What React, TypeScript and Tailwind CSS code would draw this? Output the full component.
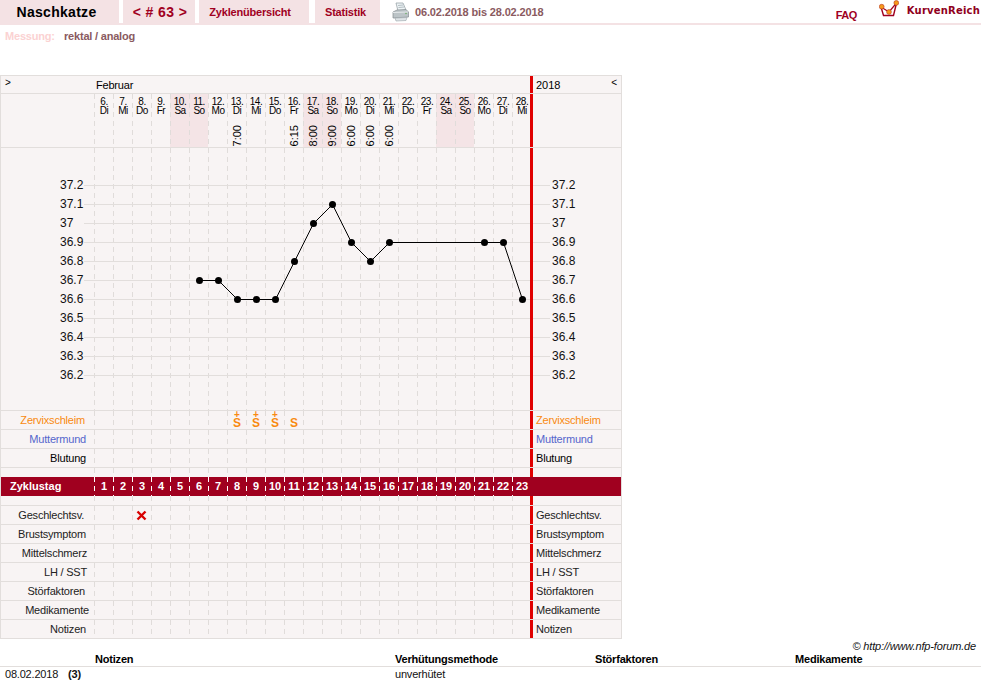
const sans = "font-['Liberation_Sans',Arial,sans-serif]";

const days = [
  ["6.", "Di", ""], ["7.", "Mi", ""], ["8.", "Do", ""], ["9.", "Fr", ""], ["10.", "Sa", ""], ["11.", "So", ""],
  ["12.", "Mo", ""], ["13.", "Di", "7:00"], ["14.", "Mi", ""], ["15.", "Do", ""], ["16.", "Fr", "6:15"], ["17.", "Sa", "8:00"],
  ["18.", "So", "9:00"], ["19.", "Mo", "6:00"], ["20.", "Di", "6:00"], ["21.", "Mi", "6:00"], ["22.", "Do", ""], ["23.", "Fr", ""],
  ["24.", "Sa", ""], ["25.", "So", ""], ["26.", "Mo", ""], ["27.", "Di", ""], ["28.", "Mi", ""],
];
const cols = days.map((_, i) => i);
const temps = ["37.2", "37.1", "37", "36.9", "36.8", "36.7", "36.6", "36.5", "36.4", "36.3", "36.2"];
const pts: [number, number][] = [
  [5, 36.7], [6, 36.7], [7, 36.6], [8, 36.6], [9, 36.6], [10, 36.8], [11, 37], [12, 37.1], [13, 36.9], [14, 36.8], [15, 36.9], [20, 36.9], [21, 36.9], [22, 36.6],
];
const PX = (i: number) => 103.5 + i * 19;
const PY = (t: number) => 37 + Math.round((37.2 - t) * 190);

function Dash({ light = false }: { light?: boolean }) {
  return (
    <div
      className={
        light
          ? "absolute left-0 top-0 bottom-0 w-px bg-[linear-gradient(#ffffff_5px,transparent_5px)] bg-[length:1px_9px]"
          : "absolute left-0 top-0 bottom-0 w-px bg-[linear-gradient(#e0dcda_5px,transparent_5px)] bg-[length:1px_9px]"
      }
    />
  );
}

function Bar() {
  return <div className="relative -ml-px w-[3px] shrink-0 bg-[#e00000]" />;
}

function Row({
  label,
  labelClass,
  right,
  rightClass,
  children,
}: {
  label: string;
  labelClass: string;
  right: string;
  rightClass?: string;
  children?: (i: number) => React.ReactNode;
}) {
  return (
    <div className="flex h-[19px] border-b border-[#e2dedc] text-[11px] leading-[18px] tracking-[-0.2px]">
      <div className={`w-[93px] shrink-0 text-right ${labelClass}`}>{label}</div>
      {cols.map((i) => (
        <div key={i} className="relative w-[19px] shrink-0 text-center">
          <Dash />
          {children?.(i)}
        </div>
      ))}
      <Bar />
      <div className={`pl-[3px] ${rightClass ?? "text-black"}`}>{right}</div>
    </div>
  );
}

function Spacer({ h, noBorder = false }: { h: string; noBorder?: boolean }) {
  return (
    <div className={`flex ${noBorder ? "" : "border-b border-[#e2dedc]"} ${h}`}>
      <div className="w-[93px] shrink-0" />
      {cols.map((i) => (
        <div key={i} className="relative w-[19px] shrink-0">
          <Dash />
        </div>
      ))}
      <Bar />
    </div>
  );
}

function Mucus({ plus }: { plus: boolean }) {
  return (
    <div className="flex flex-col items-center pl-px pt-px font-bold tracking-normal text-[#f88a10]">
      <span className="h-[6px] text-[10px] leading-[6px]">{plus ? "+" : "\u00a0"}</span>
      <span className="text-[12px] leading-[10px]">S</span>
    </div>
  );
}

function Tab({ w, className, children }: { w: string; className?: string; children: React.ReactNode }) {
  return (
    <div className={`flex h-[24px] items-center justify-center bg-[#f4e2e4] font-bold ${w} ${className ?? ""}`}>{children}</div>
  );
}

function Printer() {
  return (
    <svg width="17" height="20" viewBox="0 0 17 20" className="ml-[12px] mr-[6px] shrink-0">
      <path d="M4 1 L11 1 L14 8 L6 9 Z" fill="#eef4f6" stroke="#9aa5aa" strokeWidth="0.8" />
      <path d="M6 3.5 L11 3 M6.5 5.5 L12 5" stroke="#9aa5aa" strokeWidth="0.7" />
      <path d="M1 10 L5 8 L14 7.5 L16.5 10 L16.5 15 L1 16 Z" fill="#bcc4c7" stroke="#858d91" strokeWidth="0.7" />
      <path d="M1 10.5 L16 10" stroke="#e4e8ea" strokeWidth="1" />
      <circle cx="14" cy="11.5" r="0.8" fill="#6fae6a" />
      <path d="M3 16 L15 15.5 L14 18.5 L4 19 Z" fill="#dfe4e7" stroke="#98a2a7" strokeWidth="0.6" />
    </svg>
  );
}

function Logo() {
  return (
    <svg width="20" height="18" viewBox="0 0 20 18" className="shrink-0">
      <path d="M2 7 L4.5 15.5 L14.5 15.5 L17.5 3" fill="#fff" stroke="#a0001f" strokeWidth="1.4" />
      <path d="M2 7 L10 12 L17.5 3" fill="none" stroke="#a0001f" strokeWidth="1.2" />
      <circle cx="2.7" cy="6.7" r="2.4" fill="#f59a1b" stroke="#b8301a" strokeWidth="0.6" />
      <circle cx="10" cy="12" r="2.4" fill="#f59a1b" stroke="#b8301a" strokeWidth="0.6" />
      <circle cx="17.3" cy="2.9" r="2.4" fill="#f59a1b" stroke="#b8301a" strokeWidth="0.6" />
    </svg>
  );
}

const bottomRows: [string, string][] = [
  ["Geschlechtsv.", "pr-[10px]"],
  ["Brustsymptom", "pr-[8px]"],
  ["Mittelschmerz", "pr-[7px]"],
  ["LH / SST", "pr-[7px]"],
  ["Störfaktoren", "pr-[9px]"],
  ["Medikamente", "pr-[5px]"],
  ["Notizen", "pr-[8px]"],
];

export default function App() {
  return (
    <div className={`${sans} h-[698px] w-[981px] overflow-hidden bg-white text-black`}>
      <header className="flex h-[25px] items-start border-b-2 border-[#f4e2e4]">
        <Tab w="w-[119px]" className="pr-[6px] text-[14px] tracking-[0.3px] text-black">Naschkatze</Tab>
        <Tab w="w-[72px] ml-[4px]" className="pl-[2px] text-[14px] tracking-[0.4px] text-[#a0001f]">{"< # 63 >"}</Tab>
        <Tab w="w-[110px] ml-[4px]" className="pr-[8px] text-[11px] tracking-[-0.2px] text-[#a0001f]">Zyklenübersicht</Tab>
        <Tab w="w-[65px] ml-[6px]" className="pr-[4px] text-[11px] tracking-[-0.2px] text-[#a0001f]">Statistik</Tab>
        <div className="flex h-[24px] items-center">
          <Printer />
          <span className="text-[11px] font-bold tracking-[-0.15px] text-[#8a5a60]">06.02.2018 bis 28.02.2018</span>
        </div>
        <a className="ml-auto mr-[22px] mt-[7px] text-[11px] font-bold tracking-[-0.5px] text-[#a0001f]">FAQ</a>
        <div className="mr-px flex items-start">
          <Logo />
          <span className="ml-[8px] mt-[4px] font-['DejaVu_Sans',sans-serif] text-[10px] font-bold leading-[14px] tracking-[0.2px] text-[#8f0020]">KurvenReich</span>
        </div>
      </header>

      <div className="flex h-[22px] items-center pl-[5px] text-[11px] font-bold tracking-[-0.2px]">
        <span className="w-[59px] text-[#fbd2d2]">Messung:</span>
        <span className="text-[#8a5a60]">rektal / analog</span>
      </div>

      <section className="mt-[28px] w-[622px] border-r border-t border-l border-[#e2dedc] bg-[#f8f4f4]">
        <div className="flex h-[18px] border-b border-[#e2dedc] text-[11px] leading-[18px]">
          <div className="w-[93px] shrink-0 pl-[4px] text-[10px] leading-[14px]">&gt;</div>
          <div className="w-[436px] shrink-0 pl-[2px] tracking-[-0.2px]">Februar</div>
          <div className="w-[3px] shrink-0 bg-[#e00000]" />
          <div className="flex flex-1 justify-between pl-[3px] pr-[4px]">
            <span>2018</span>
            <span className="text-[10px] leading-[14px]">&lt;</span>
          </div>
        </div>

        <div className="flex h-[54px] border-b border-[#e2dedc]">
          <div className="w-[93px] shrink-0" />
          {days.map(([d, w, t], i) => {
            const weekend = w === "Sa" || w === "So";
            return (
              <div key={i} className={`relative flex w-[19px] shrink-0 flex-col items-center pl-px pt-[3px] ${weekend ? "bg-[#f4e4e6]" : ""}`}>
                <Dash />
                <span className="text-[10px] leading-[9px] tracking-[-0.5px]">{d}</span>
                <span className="text-[10px] leading-[10px] tracking-[-0.5px]">{w}</span>
                {t && (
                  <span className="mt-[9px] rotate-180 text-[11px] leading-[14px] [writing-mode:vertical-rl]">{t}</span>
                )}
              </div>
            );
          })}
          <Bar />
        </div>

        <div className="h-[262px]">
          <svg width="620" height="262" viewBox="0 0 620 262" className="block">
            {cols.map((i) => (
              <line key={i} x1={93.5 + i * 19} x2={93.5 + i * 19} y1="0" y2="262" stroke="#e0dcda" strokeDasharray="5 4" />
            ))}
            {temps.map((t) => {
              const y = PY(parseFloat(t)) + 0.5;
              return (
                <g key={t}>
                  <line x1="83" x2="549" y1={y} y2={y} stroke="#e2dedc" />
                  <text x="59" y={y + 3.5} fontSize="12" fill="#111">{t}</text>
                  <text x="551" y={y + 3.5} fontSize="12" fill="#111">{t}</text>
                </g>
              );
            })}
            <rect x="529" y="0" width="3" height="262" fill="#e00000" />
            <polyline
              fill="none"
              stroke="#000"
              strokeWidth="1"
              points={pts.map(([i, t]) => `${PX(i)},${PY(t) + 0.5}`).join(" ")}
            />
            {pts.map(([i, t]) => (
              <circle key={i} cx={PX(i)} cy={PY(t) + 0.5} r="3.5" fill="#000" />
            ))}
          </svg>
        </div>

        <Spacer h="h-0" />
        <Row label="Zervixschleim" labelClass="pr-[9px] text-[#f88a10]" right="Zervixschleim" rightClass="text-[#f88a10]">
          {(i) => (i >= 7 && i <= 10 ? <Mucus plus={i < 10} /> : null)}
        </Row>
        <Row label="Muttermund" labelClass="pr-[8px] text-[#5566cc]" right="Muttermund" rightClass="text-[#5566cc]" />
        <Row label="Blutung" labelClass="pr-[8px]" right="Blutung" />
        <Spacer h="h-[9px]" noBorder />

        <div className="flex h-[19px] bg-[#a0001f] text-[11px] font-bold leading-[19px] text-white">
          <div className="w-[93px] shrink-0 pl-[9px]">Zyklustag</div>
          {cols.map((i) => (
            <div key={i} className="relative w-[19px] shrink-0 pl-px text-center">
              <Dash light />
              {i + 1}
            </div>
          ))}
        </div>

        <Spacer h="h-[10px]" />
        {bottomRows.map(([label, pr]) => (
          <Row key={label} label={label} labelClass={`${pr} text-[#222]`} right={label} rightClass="text-[#222]">
            {(i) =>
              label === "Geschlechtsv." && i === 2 ? (
                <svg width="11" height="11" viewBox="0 0 11 11" className="absolute left-[4px] top-[4px]">
                  <path d="M1.5 1.5 L9.5 9.5 M9.5 1.5 L1.5 9.5" stroke="#d80000" strokeWidth="2.4" />
                </svg>
              ) : null
            }
          </Row>
        ))}
      </section>

      <div className="mr-[5px] text-right text-[11px] italic leading-[14px] tracking-[-0.15px] text-[#111]">© http://www.nfp-forum.de</div>

      <div className="grid h-[14px] grid-cols-[95px_300px_200px_200px_1fr] border-b border-[#e2dedc] text-[11px] font-bold leading-[13px] tracking-[-0.2px]">
        <span />
        <span>Notizen</span>
        <span>Verhütungsmethode</span>
        <span>Störfaktoren</span>
        <span>Medikamente</span>
      </div>
      <div className="grid grid-cols-[95px_300px_200px_200px_1fr] text-[11px] leading-[15px] tracking-[-0.2px] text-[#111]">
        <div className="flex">
          <span className="w-[63px] pl-[5px]">08.02.2018</span>
          <span className="pl-[5px] font-bold">(3)</span>
        </div>
        <span />
        <span>unverhütet</span>
      </div>
    </div>
  );
}
